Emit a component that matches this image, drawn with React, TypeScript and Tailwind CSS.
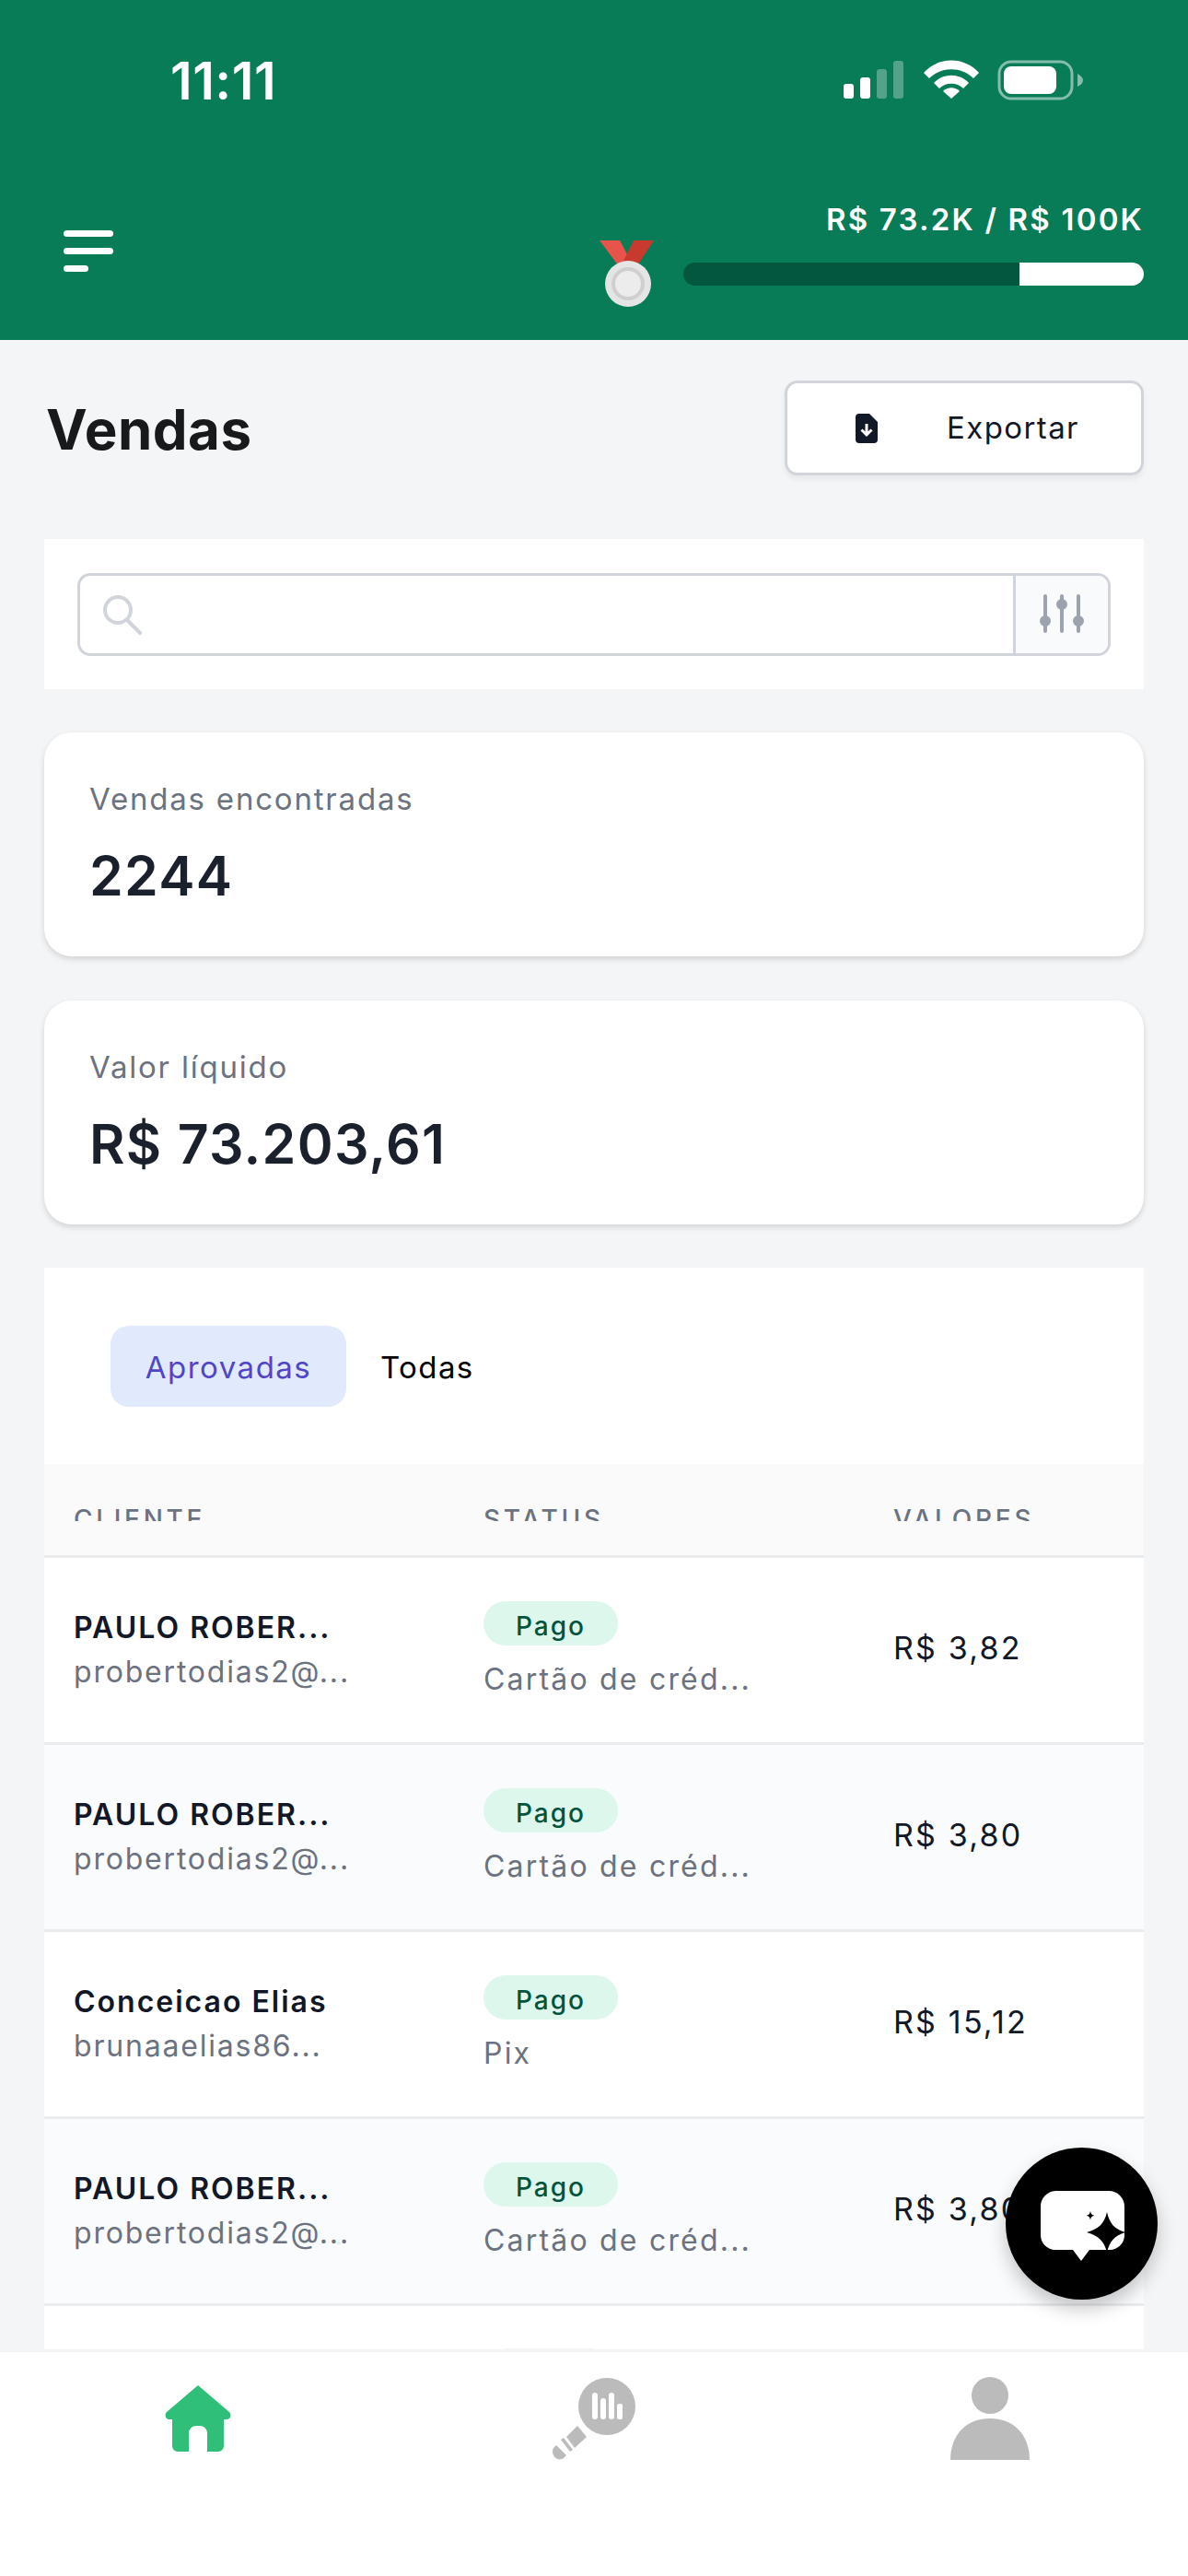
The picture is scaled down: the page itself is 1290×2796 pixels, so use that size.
const font = { fontFamily: 'Inter, "Liberation Sans", sans-serif' };

function Signal() {
  return (
    <svg width="66" height="42" viewBox="0 0 66 42" fill="#fff">
      <rect x="0" y="25" width="11" height="16" rx="3" />
      <rect x="18" y="18" width="11" height="23" rx="3" />
      <rect x="36" y="9" width="11" height="32" rx="3" opacity="0.3" />
      <rect x="54" y="0" width="11" height="41" rx="3" opacity="0.3" />
    </svg>
  );
}

function Wifi() {
  return (
    <svg width="60" height="42" viewBox="0 0 60 42" fill="#fff">
      <path d="M0 14 C16 -4 44 -4 60 14 L54 20 C41 7 19 7 6 20 Z" />
      <path d="M11 25 C21 14 39 14 49 25 L43 31 C36 24 24 24 17 31 Z" />
      <path d="M21 34 C26 29 34 29 39 34 L30 42 Z" />
    </svg>
  );
}

function Battery() {
  return (
    <svg width="94" height="44" viewBox="0 0 94 44" fill="none">
      <rect x="2" y="2" width="79" height="40" rx="13" stroke="#fff" strokeOpacity="0.5" strokeWidth="3" />
      <rect x="7" y="7" width="57" height="30" rx="8" fill="#fff" />
      <path d="M87 15 C91 17 93 20 93 22 C93 25 91 27 87 29 Z" fill="#fff" fillOpacity="0.5" />
    </svg>
  );
}

function Medal() {
  return (
    <svg width="60" height="73" viewBox="0 0 60 73">
      <path d="M0 0 H22 L38 30 L24 32 Z" fill="#e8534b" />
      <path d="M59 0 H37 L24 26 L38 32 Z" fill="#c8392e" />
      <circle cx="31" cy="47" r="25" fill="#e5e5e5" />
      <circle cx="31" cy="47" r="16" fill="#ececec" stroke="#cfcfcf" strokeWidth="4" />
    </svg>
  );
}

function ExportIcon() {
  return (
    <svg width="24" height="32" viewBox="0 0 24 32">
      <path d="M4 0 H15 L24 9 V28 A4 4 0 0 1 20 32 H4 A4 4 0 0 1 0 28 V4 A4 4 0 0 1 4 0 Z" fill="#111827" />
      <path d="M12 11 V22 M6.5 17.5 L12 23 L17.5 17.5" stroke="#fff" strokeWidth="3" fill="none" />
    </svg>
  );
}

function SearchIcon() {
  return (
    <svg width="44" height="44" viewBox="0 0 44 44" fill="none" stroke="#d1d5db" strokeWidth="4" strokeLinecap="round">
      <circle cx="17" cy="17" r="14" />
      <path d="M27 28 L41 42" />
    </svg>
  );
}

function SlidersIcon() {
  return (
    <svg width="48" height="44" viewBox="0 0 48 44" fill="#9ca3af" stroke="#9ca3af" strokeWidth="4" strokeLinecap="round">
      <path d="M6 2 V40 M24 2 V40 M42 2 V40" />
      <circle cx="6" cy="29" r="4" />
      <circle cx="24" cy="11" r="4" />
      <circle cx="42" cy="29" r="4" />
    </svg>
  );
}

function HomeIcon() {
  return (
    <svg width="72" height="72" viewBox="0 0 72 72" fill="#2fbf78">
      <path d="M36 0 L70 29 C73 32 71 37 67 37 H64 V66 A6 6 0 0 1 58 72 H46 V52 A8 8 0 0 0 38 44 H34 A8 8 0 0 0 26 52 V72 H14 A6 6 0 0 1 8 66 V37 H5 C1 37 -1 32 2 29 Z" />
    </svg>
  );
}

function ChartSearchIcon() {
  return (
    <svg width="92" height="90" viewBox="0 0 92 90" fill="#bbbbbb">
      <circle cx="59" cy="32" r="31" />
      <g fill="#fff">
        <rect x="43" y="17" width="6" height="29" rx="3" />
        <rect x="52" y="23" width="6" height="23" rx="3" />
        <rect x="61" y="17" width="6" height="29" rx="3" />
        <rect x="70" y="29" width="6" height="17" rx="2" />
      </g>
      <path d="M27 53 L37 65 L24 77 L15 65 Z" />
      <path d="M9 68 L12 66 L22 79 L19 81 Z" />
      <path d="M2 76 L4 74 L15 85 L12 88 C8 91 3 89 1 85 C-1 81 0 78 2 76 Z" />
    </svg>
  );
}

function PersonIcon() {
  return (
    <svg width="86" height="90" viewBox="0 0 86 90" fill="#bbbbbb">
      <circle cx="43" cy="20" r="20" />
      <path d="M0 90 C0 62 18 45 43 45 C68 45 86 62 86 90 Z" />
    </svg>
  );
}

function ChatSparkIcon() {
  return (
    <svg width="96" height="80" viewBox="0 0 96 80">
      <path d="M18 2 H76 A17 17 0 0 1 93 19 V50 A16 16 0 0 1 77 66 H55 L46 78 L37 66 H18 A16 16 0 0 1 2 50 V19 A17 17 0 0 1 18 2 Z" fill="#fff" />
      <path d="M74 25 C77 38 82 43 94 47 C82 51 77 56 74 69 C71 56 65 51 52 47 C65 43 71 38 74 25 Z" fill="#000" />
      <path d="M56 24 C56.700 27 57.500 28 60.500 28.800 C57.500 29.600 56.700 30.500 56 33.500 C55.300 30.500 54.500 29.600 51.500 28.800 C54.500 28 55.300 27 56 24 Z" fill="#000" />
    </svg>
  );
}

type Row = { name: string; email: string; pay: string; value: string };

const rows: Row[] = [
  { name: 'PAULO ROBER...', email: 'probertodias2@...', pay: 'Cartão de créd...', value: 'R$ 3,82' },
  { name: 'PAULO ROBER...', email: 'probertodias2@...', pay: 'Cartão de créd...', value: 'R$ 3,80' },
  { name: 'Conceicao Elias', email: 'brunaaelias86...', pay: 'Pix', value: 'R$ 15,12' },
  { name: 'PAULO ROBER...', email: 'probertodias2@...', pay: 'Cartão de créd...', value: 'R$ 3,80' },
];

function SaleRow({ row, odd }: { row: Row; odd: boolean }) {
  return (
    <div className={`grid h-[203px] grid-cols-[445px_445px_1fr] items-center border-b-[3px] border-[#eaebed] px-[32px] ${odd ? 'bg-[#fafbfc]' : 'bg-white'}`}>
      <div className="flex flex-col">
        <span className="text-[32px] leading-[48px] font-semibold tracking-[2px] text-[#111827]">{row.name}</span>
        <span className="text-[32px] leading-[48px] tracking-[1.8px] text-[#6b7280]">{row.email}</span>
      </div>
      <div className="flex flex-col items-start pt-[2px]">
        <span className="flex h-[48px] w-[146px] items-center justify-center rounded-full bg-[#def7ec] pt-[6px] text-[28px] font-medium tracking-[2px] text-[#03543f]">Pago</span>
        <span className="mt-[13px] text-[32px] leading-[48px] tracking-[2.2px] text-[#6b7280]">{row.pay}</span>
      </div>
      <span className="pb-[4px] text-[34px] leading-[48px] tracking-[2.2px] text-[#111827]">{row.value}</span>
    </div>
  );
}

function StatCard({ label, value }: { label: string; value: string }) {
  return (
    <div className="flex h-[243px] flex-col rounded-[30px] bg-white px-[49px] pt-[48px] shadow-[0_3px_6px_rgba(0,0,0,0.14)]">
      <span className="text-[33px] leading-[48px] tracking-[1.8px] text-[#6b7280]">{label}</span>
      <span className="mt-[24px] text-[59px] leading-[72px] font-semibold tracking-[1.3px] text-[#1a202c]">{value}</span>
    </div>
  );
}

export default function App() {
  return (
    <div style={font} className="relative flex h-[2796px] w-[1290px] flex-col overflow-hidden bg-[#f4f5f6]">
      <header className="h-[369px] shrink-0 bg-[#087b57]">
        <div className="flex h-[220px] items-start justify-between pt-[60px] pr-[113px] pl-[185px]">
          <span className="text-[56px] leading-[56px] font-semibold tracking-[0.5px] text-white">11:11</span>
          <div className="flex items-start pt-[5px]">
            <div className="pt-[1px]"><Signal /></div>
            <div className="ml-[21px]"><Wifi /></div>
            <div className="ml-[20px]"><Battery /></div>
          </div>
        </div>
        <div className="flex items-start justify-between pr-[48px] pl-[69px]">
          <div className="mt-[30px] flex flex-col gap-[12px]">
            <div className="h-[7px] w-[54px] rounded-full bg-white" />
            <div className="h-[7px] w-[54px] rounded-full bg-white" />
            <div className="h-[7px] w-[27px] rounded-full bg-white" />
          </div>
          <div className="flex items-start gap-[31px]">
            <div className="mt-[41px]"><Medal /></div>
            <div className="flex w-[500px] flex-col items-end">
              <span className="mt-[-2px] text-[33px] leading-[40px] font-semibold tracking-[2.2px] text-white">R$ 73.2K / R$ 100K</span>
              <div className="mt-[27px] flex h-[25px] w-full overflow-hidden rounded-full bg-[#03573f]">
                <div className="ml-[365px] flex-1 bg-white" />
              </div>
            </div>
          </div>
        </div>
      </header>

      <main className="flex min-h-0 flex-1 flex-col overflow-hidden px-[48px] pt-[44px]">
        <div className="flex shrink-0 items-center justify-between pl-[2px]">
          <h1 className="pt-[3px] text-[60px] font-bold tracking-[0.5px] text-[#18191b]">Vendas</h1>
          <button className="flex h-[103px] w-[390px] items-center rounded-[14px] border-[3px] border-[#d1d5db] bg-white pl-[74px] shadow-[0_4px_6px_rgba(0,0,0,0.06)]">
            <ExportIcon />
            <span className="ml-[75px] text-[33px] tracking-[1.4px] text-[#111827]">Exportar</span>
          </button>
        </div>

        <div className="mt-[69px] shrink-0 bg-white px-[36px] pt-[37px] pb-[36px]">
          <div className="flex h-[90px] overflow-hidden rounded-[14px] border-[3px] border-[#d1d5db]">
            <div className="flex flex-1 items-center pl-[24px]"><SearchIcon /></div>
            <div className="flex w-[103px] items-center justify-center border-l-[3px] border-[#d1d5db] bg-[#f9fafb]"><SlidersIcon /></div>
          </div>
        </div>

        <div className="mt-[47px] shrink-0"><StatCard label="Vendas encontradas" value="2244" /></div>
        <div className="mt-[48px] shrink-0"><StatCard label="Valor líquido" value="R$ 73.203,61" /></div>

        <div className="mt-[47px] min-h-0 flex-1 overflow-hidden bg-white">
          <div className="flex h-[213px] items-start gap-[37px] pt-[63px] pl-[72px]">
            <span className="flex h-[88px] w-[256px] items-center justify-center rounded-[20px] bg-[#e1e9fc] pt-[3px] text-[33px] tracking-[1.5px] text-[#4f46c8]">Aprovadas</span>
            <span className="flex h-[88px] items-center pt-[3px] text-[33px] tracking-[1.4px] text-black">Todas</span>
          </div>
          <div className="grid h-[102px] grid-cols-[445px_445px_1fr] items-start border-b-[3px] border-[#eaebed] bg-[#fafafb] px-[32px]">
            {['CLIENTE', 'STATUS', 'VALORES'].map((t) => (
              <div key={t} className="h-[62px] overflow-hidden pt-[44px] text-[28px] leading-[32px] font-medium tracking-[3.700px] text-[#6b7280]">{t}</div>
            ))}
          </div>
          {rows.map((row, i) => (
            <SaleRow key={i} row={row} odd={i % 2 === 1} />
          ))}
          <div className="flex bg-white pt-[46px] pl-[495px]">
            <div className="h-[40px] w-[107px] rounded-t-[8px] bg-[#f3f4f6]" />
          </div>
        </div>
      </main>

      <nav className="flex h-[246px] shrink-0 items-start justify-between border-t-[3px] border-[#f3f4f6] bg-white pt-[27px] pr-[172px] pl-[179px]">
        <div className="mt-[9px]"><HomeIcon /></div>
        <div className="ml-[8px]"><ChartSearchIcon /></div>
        <PersonIcon />
      </nav>

      <button className="absolute top-[2331px] left-[1092px] flex h-[165px] w-[165px] items-center justify-center rounded-full bg-black pt-[4px] pl-[3px] shadow-[0_10px_20px_rgba(0,0,0,0.22)]">
        <ChatSparkIcon />
      </button>
    </div>
  );
}
